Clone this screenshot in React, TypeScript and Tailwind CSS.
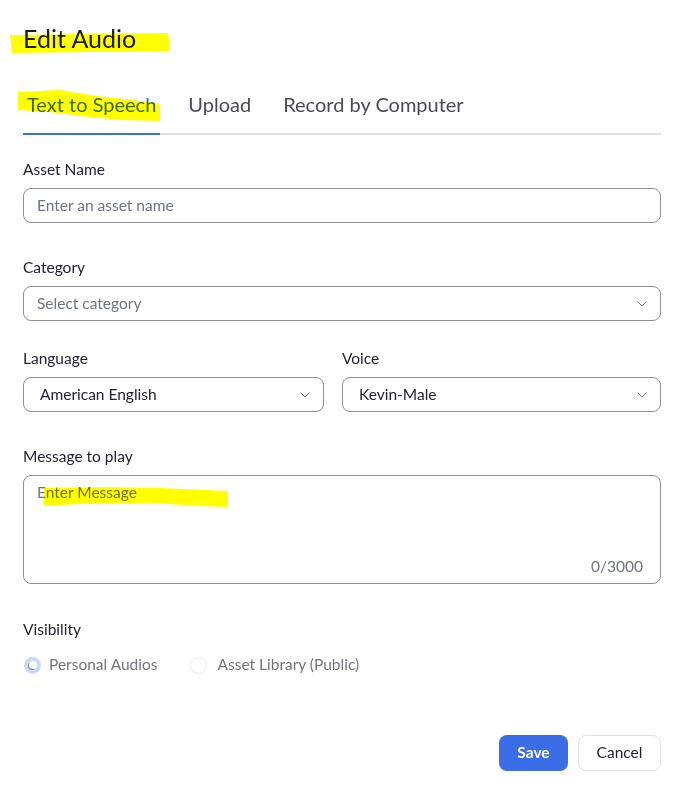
import { ChevronDown } from "lucide-react";

/* ---- Small pieces ---- */

function Label({ children, className = "" }: { children: React.ReactNode; className?: string }) {
  return <div className={`h-5 text-[15.5px] leading-5 text-[#232333] mb-[9px] ${className}`}>{children}</div>;
}

function SelectBox({ value, placeholder }: { value?: string; placeholder?: string }) {
  return (
    <div className="flex h-[35px] items-center justify-between rounded-[8px] border border-[#8f8f96] bg-white pr-[10px]">
      {value ? (
        <span className="pl-4 text-[15.5px] text-[#232333]">{value}</span>
      ) : (
        <span className="pl-[13px] text-[15.5px] text-[#6e7680]">{placeholder}</span>
      )}
      <ChevronDown size={16} strokeWidth={1.4} className="text-[#6e7680]" />
    </div>
  );
}

/* ---- Highlighter marks drawn over the screenshot ---- */

function Highlights() {
  return (
    <svg
      className="pointer-events-none absolute left-0 top-0 mix-blend-multiply"
      width={687}
      height={797}
      viewBox="0 0 687 797"
    >
      <polygon points="10,35 168,33 170,51 12,53" fill="#ffff00" />
      <polygon
        points="18,92 60,90 96,96 140,101 160,104 160,121 120,120 80,116 50,112 18,110"
        fill="#ffff00"
      />
      <polygon
        points="44,488 100,487 160,488 228,491 228,507 200,506 150,503 100,503 60,505 44,506"
        fill="#ffff00"
      />
    </svg>
  );
}

/* ---- Main ---- */

export default function App() {
  return (
    <div className="relative min-h-screen bg-white pl-[23px] pr-[26px] pt-[24px] font-['Lato','Noto_Sans',sans-serif]">
      <h1 className="text-[25px] leading-[28px] text-[#1b1b1b]">Edit Audio</h1>

      {/* Tabs */}
      <div className="mt-[40px] flex gap-[24px] border-b-2 border-[#dfdfe4]">
        <div className="-mb-[2px] border-b-2 border-[#3d6fd6] px-1 pb-[17px] text-[20px] leading-6 text-[#3b6bd1]">
          Text to Speech
        </div>
        <div className="px-1 pb-[17px] text-[20px] leading-6 text-[#4a4a55]">Upload</div>
        <div className="px-1 pb-[17px] text-[20px] leading-6 text-[#4a4a55]">Record by Computer</div>
      </div>

      {/* Asset name */}
      <Label className="mt-[24px]">Asset Name</Label>
      <div className="flex h-[35px] items-center rounded-[8px] border border-[#8f8f96] pl-[13px] text-[15.5px] text-[#6e7680]">
        Enter an asset name
      </div>

      {/* Category */}
      <Label className="mt-[34px]">Category</Label>
      <SelectBox placeholder="Select category" />

      {/* Language / Voice */}
      <div className="mt-[27px] grid grid-cols-[301px_1fr] gap-x-[18px]">
        <div>
          <Label>Language</Label>
          <SelectBox value="American English" />
        </div>
        <div>
          <Label>Voice</Label>
          <SelectBox value="Kevin-Male" />
        </div>
      </div>

      {/* Message */}
      <Label className="mt-[34px]">Message to play</Label>
      <div className="flex h-[109px] flex-col justify-between rounded-[8px] border border-[#8f8f96] pb-[5px] pl-[13px] pr-[17px] pt-[5px] text-[15.5px] text-[#6e7680]">
        <span>Enter Message</span>
        <span className="self-end">0/3000</span>
      </div>

      {/* Visibility */}
      <Label className="mt-[35px]">Visibility</Label>
      <div className="mt-[16px] flex h-5 items-center text-[15.5px] text-[#74747f]">
        <span className="ml-px flex h-[17px] w-[17px] items-center justify-center rounded-full bg-[#cbdaf6]">
          <span className="h-[8px] w-[8px] rounded-full bg-white shadow-[-1px_1px_0_#8a8f9a]" />
        </span>
        <span className="ml-[8px]">Personal Audios</span>
        <span className="ml-[33px] h-[17px] w-[17px] rounded-full border border-[#ececef] bg-white" />
        <span className="ml-[10px]">Asset Library (Public)</span>
      </div>

      {/* Actions */}
      <div className="mt-[60px] flex justify-end gap-[10px]">
        <button className="h-9 w-[69px] rounded-[8px] bg-[#3b6de7] text-[15.5px] font-bold text-white">Save</button>
        <button className="h-9 w-[83px] rounded-[8px] border border-[#e2e2e6] bg-white text-[15.5px] text-[#232333]">
          Cancel
        </button>
      </div>

      <Highlights />
    </div>
  );
}
